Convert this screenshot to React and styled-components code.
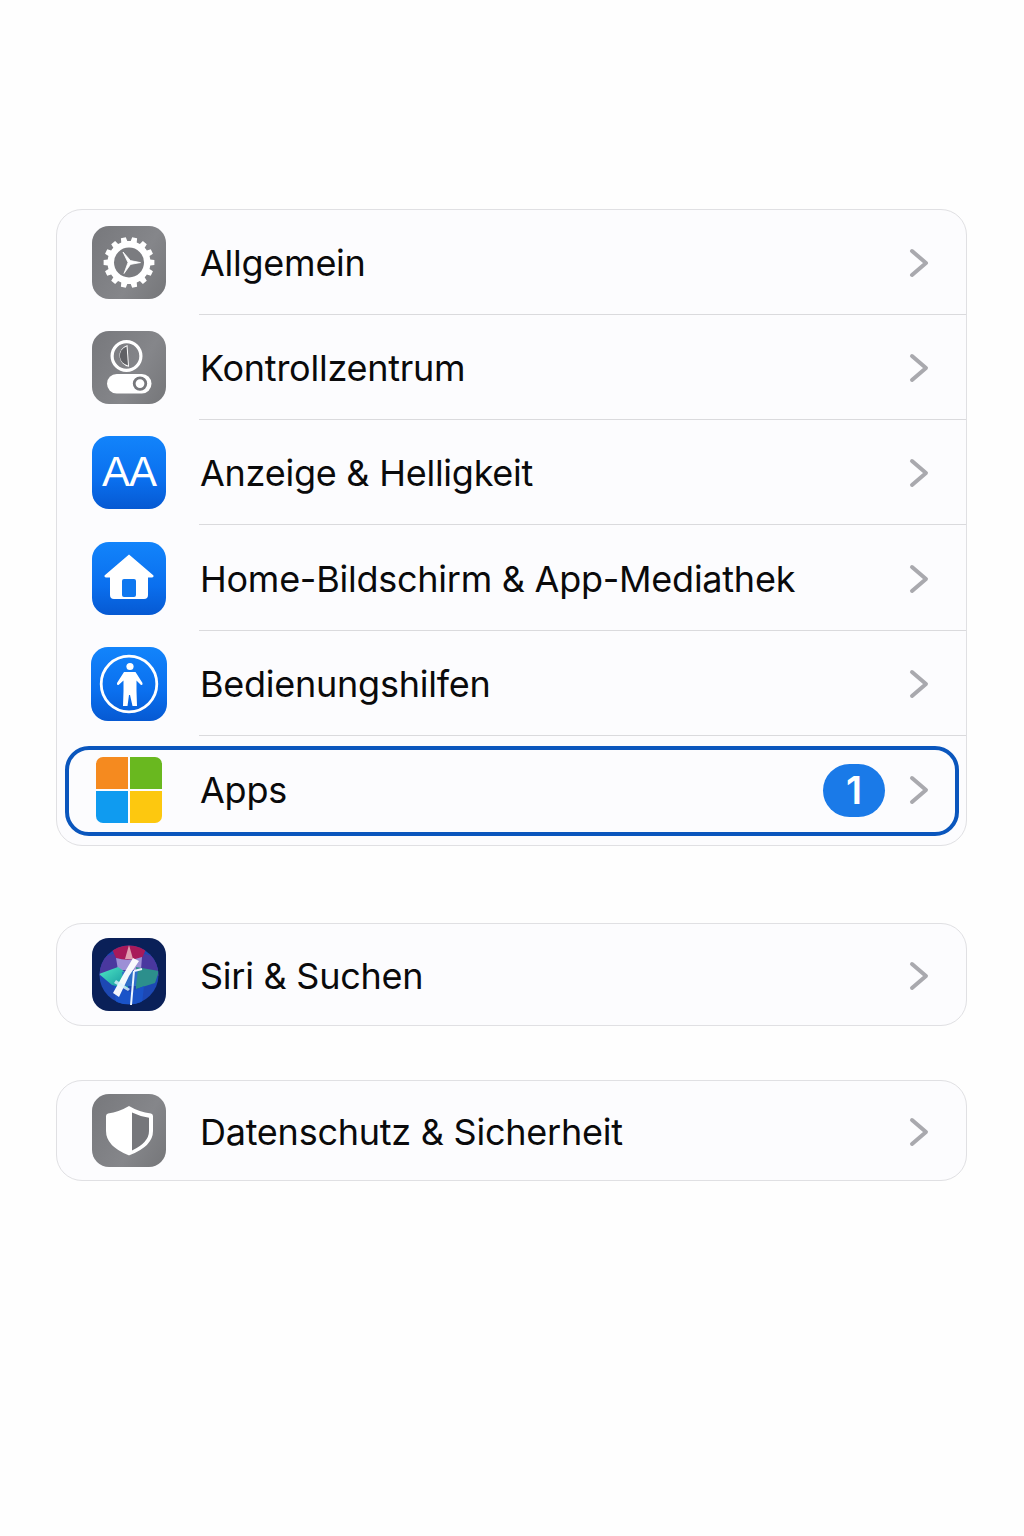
import React from "react";
import styled, { createGlobalStyle } from "styled-components";

const GlobalStyle = createGlobalStyle`
  html, body {
    margin: 0;
    padding: 0;
    background: #fefefe;
  }
`;

const Page = styled.div`
  box-sizing: border-box;
  width: 1024px;
  height: 1536px;
  padding: 209px 57px 0 56px;
  font-family: Inter, "Liberation Sans", sans-serif;
  color: #0a0a0b;
`;

const Card = styled.section`
  background: #fcfcfe;
  border: 1px solid #e0e0e3;
  border-radius: 26px;
  margin-bottom: ${(props) => props.$gap || 0}px;
`;

const Row = styled.div`
  display: flex;
  align-items: stretch;
  height: ${(props) => props.$height || 105}px;
  padding-left: 35px;
`;

const Body = styled.div`
  flex: 1;
  display: flex;
  align-items: center;
  margin-left: 33px;
  padding: 2px 37px 0 1px;
  border-bottom: ${(props) => (props.$last ? "none" : "1px solid #dadadd")};
`;

const Label = styled.span`
  flex: 1;
  font-size: 36px;
  letter-spacing: -0.25px;
  line-height: 1;
`;

const IconSlot = styled.div`
  width: 74px;
  display: flex;
  align-items: center;
  justify-content: center;
  svg {
    display: block;
  }
`;

const Tile = styled.div`
  flex: none;
  width: ${(props) => props.$size || 74}px;
  height: ${(props) => (props.$size ? props.$size - 2 : 73)}px;
  border-radius: 17px;
  display: flex;
  align-items: center;
  justify-content: center;
  overflow: hidden;
  background: ${(props) =>
    props.$tone === "blue"
      ? "linear-gradient(180deg, #1284fb 0%, #0a6fee 60%, #0659d2 100%)"
      : props.$tone === "navy"
      ? "#0a2058"
      : "linear-gradient(120deg, #77787c, #85868a 60%, #757679)"};
`;

const TileText = styled.span`
  color: #fff;
  font-family: "Liberation Sans", sans-serif;
  font-size: 42px;
  line-height: 1;
  letter-spacing: -1px;
  margin-top: -2px;
`;

const FocusRow = styled.div`
  display: flex;
  align-items: center;
  box-sizing: border-box;
  height: 90px;
  margin: 10px 7px 9px 8px;
  padding: 0 26px 2px 27px;
  border: 4px solid #0a56bd;
  border-radius: 24px;
`;

const FocusLabel = styled(Label)`
  margin-left: 38px;
`;

const AppGrid = styled.div`
  width: 66px;
  height: 66px;
  display: grid;
  grid-template-columns: 1fr 1fr;
  grid-template-rows: 1fr 1fr;
  gap: 2px;
  border-radius: 7px;
  overflow: hidden;
`;

const AppCell = styled.div`
  background: ${(props) => props.$color};
`;

const Badge = styled.div`
  width: 62px;
  height: 53px;
  margin-right: 24px;
  border-radius: 27px;
  background: #1a7ae8;
  color: #fff;
  display: flex;
  align-items: center;
  justify-content: center;
  font-family: Inter, sans-serif;
  font-weight: 600;
  font-size: 38px;
  line-height: 1;
`;

const Chevron = () => (
  <svg width="20" height="30" viewBox="0 0 20 30" fill="none">
    <polyline
      points="3,3 17,15 3,27"
      stroke="#a9a9ae"
      strokeWidth="4"
      strokeLinecap="round"
      strokeLinejoin="round"
    />
  </svg>
);

// chunky gear outline, 14 teeth around a wide band
const gearPath = (() => {
  const cx = 37;
  const cy = 36.5;
  const teeth = 14;
  const s = (Math.PI * 2) / teeth;
  let d = "";
  for (let i = 0; i < teeth; i++) {
    const a = i * s;
    const pts = [
      [21.5, a - s * 0.5],
      [21.5, a - s * 0.32],
      [25.5, a - s * 0.22],
      [25.5, a + s * 0.22],
      [21.5, a + s * 0.32],
    ];
    pts.forEach(([r, t], j) => {
      const x = (cx + r * Math.cos(t)).toFixed(2);
      const y = (cy + r * Math.sin(t)).toFixed(2);
      d += `${i === 0 && j === 0 ? "M" : "L"}${x} ${y} `;
    });
  }
  return d + "Z";
})();

const GearIcon = () => (
  <svg width="74" height="73" viewBox="0 0 74 73">
    <path d={gearPath} fill="#fff" />
    <circle cx="37" cy="36.5" r="15" fill="#7b7c80" />
    <path
      d="M31 26 L38.5 34.6 L48.5 36.6 L38.5 38.4 L32 47.5 L36 36.5 Z"
      fill="#fff"
      stroke="#fff"
      strokeWidth="0.8"
      strokeLinejoin="round"
    />
  </svg>
);

const ControlIcon = () => (
  <svg width="74" height="73" viewBox="0 0 74 73">
    <circle cx="34.5" cy="25" r="14.4" fill="none" stroke="#fff" strokeWidth="3.2" />
    <path d="M35.5 14 A11.2 11.2 0 0 0 37 35.8 Z" fill="#fff" />
    <path d="M34.6 15.4 A9.8 9.8 0 0 0 36 34.4 Z" fill="#606165" />
    <rect x="15" y="43" width="44.5" height="19.5" rx="9.7" fill="#fff" />
    <circle cx="48" cy="52.6" r="5.8" fill="none" stroke="#77787c" strokeWidth="2.8" />
  </svg>
);

const HomeIcon = () => (
  <svg width="74" height="73" viewBox="0 0 74 73">
    <path
      d="M37 12.5 L61.5 33.5 Q62 35.5 60 35.5 L56 35.5 L56 53 Q56 57 52 57 L22 57 Q18 57 18 53 L18 35.5 L14 35.5 Q12 35.5 12.5 33.5 Z"
      fill="#fff"
    />
    <rect x="30" y="37" width="14" height="18" rx="2" fill="#0f78f0" />
  </svg>
);

const AccessIcon = () => (
  <svg width="76" height="74" viewBox="0 0 76 74">
    <circle cx="38" cy="37" r="27.8" fill="none" stroke="#fff" strokeWidth="2.8" />
    <circle cx="39" cy="19.5" r="3.6" fill="#fff" />
    <path
      d="M33 25 L44.5 25 L51.5 36 Q52 38.5 50 38 L45.5 33.5 L45.5 44 L46 59 L41.5 59 L39 48 L38 48 L36.5 59 L32 59 L32.5 44 L32.5 33.5 L27.5 38 Q25.5 38.5 26 36 Z"
      fill="#fff"
    />
  </svg>
);

const SiriIcon = () => (
  <svg width="74" height="73" viewBox="0 0 74 73">
    <defs>
      <clipPath id="siri-disc">
        <circle cx="37" cy="37" r="29.5" />
      </clipPath>
      <linearGradient id="siri-left" x1="0" y1="0" x2="1" y2="1">
        <stop offset="0" stopColor="#4fe8c4" />
        <stop offset="1" stopColor="#0f8f9c" />
      </linearGradient>
    </defs>
    <g clipPath="url(#siri-disc)">
      <rect x="7" y="7" width="60" height="60" fill="#1d48b4" />
      <path d="M7 20 L24 15 L50 15 L67 20 L67 38 L7 38 Z" fill="#4a389f" />
      <path d="M18 7 H56 L50 20 Q37 25 24 20 Z" fill="#a81a5a" />
      <path d="M37 7 L41 21 L33 21 Z" fill="#e0a0b0" />
      <path d="M24 20 Q37 24 50 19 L49 32 L26 32 Z" fill="#9d8fd6" />
      <path d="M7 36 L26 29 L36 36 L36 51 L20 47 Z" fill="url(#siri-left)" />
      <path d="M44 29 L67 33 L63 45 L44 51 Z" fill="#2c8f8c" />
      <path d="M30 34 L46 32 L44 48 L32 48 Z" fill="#2f6fc8" />
      <path d="M22 48 L38 54 L52 48 L50 66 L24 66 Z" fill="#1a53c8" />
    </g>
    <path d="M41 20 L47 23 L37 38 L27 59 L21 55 L31 37 Z" fill="#fff" opacity="0.95" />
    <path d="M42 33 L39 67 M42 33 L50 31" stroke="#eef6ff" strokeWidth="2" fill="none" />
    <path d="M24 42 L38 51 L36 53 L22 45 Z" fill="#dff4ff" opacity="0.8" />
  </svg>
);

const ShieldIcon = () => (
  <svg width="74" height="73" viewBox="0 0 74 73">
    <path
      d="M37 12 Q47 18 59 19.5 Q61 20 61 22 L61 37 Q61 52 38 61 Q37 61.4 36 61 Q14 52 14 37 L14 22 Q14 20 16 19.5 Q27 18 37 12 Z"
      fill="#fff"
    />
    <path
      d="M40 18.5 Q48 22.4 57 23.8 L57 37 Q57 48.5 40 56.5 Z"
      fill="#76777b"
    />
  </svg>
);

const topRows = [
  { label: "Allgemein", icon: <Tile><GearIcon /></Tile> },
  { label: "Kontrollzentrum", icon: <Tile><ControlIcon /></Tile> },
  { label: "Anzeige & Helligkeit", icon: <Tile $tone="blue"><TileText>AA</TileText></Tile> },
  { label: "Home-Bildschirm & App-Mediathek", height: 106, icon: <Tile $tone="blue"><HomeIcon /></Tile> },
  { label: "Bedienungshilfen", icon: <Tile $tone="blue" $size={76}><AccessIcon /></Tile> },
];

export default function App() {
  return (
    <>
      <GlobalStyle />
      <Page>
        <Card $gap={77}>
          {topRows.map((row) => (
            <Row key={row.label} $height={row.height}>
              <IconSlot>{row.icon}</IconSlot>
              <Body>
                <Label>{row.label}</Label>
                <Chevron />
              </Body>
            </Row>
          ))}
          <FocusRow>
            <AppGrid>
              <AppCell $color="#f58a1f" />
              <AppCell $color="#69b81f" />
              <AppCell $color="#0f9bf0" />
              <AppCell $color="#fdc80f" />
            </AppGrid>
            <FocusLabel>Apps</FocusLabel>
            <Badge>1</Badge>
            <Chevron />
          </FocusRow>
        </Card>

        <Card $gap={54}>
          <Row $height={101}>
            <IconSlot>
              <Tile $tone="navy"><SiriIcon /></Tile>
            </IconSlot>
            <Body $last>
              <Label>Siri &amp; Suchen</Label>
              <Chevron />
            </Body>
          </Row>
        </Card>

        <Card>
          <Row $height={99}>
            <IconSlot>
              <Tile><ShieldIcon /></Tile>
            </IconSlot>
            <Body $last>
              <Label>Datenschutz &amp; Sicherheit</Label>
              <Chevron />
            </Body>
          </Row>
        </Card>
      </Page>
    </>
  );
}
